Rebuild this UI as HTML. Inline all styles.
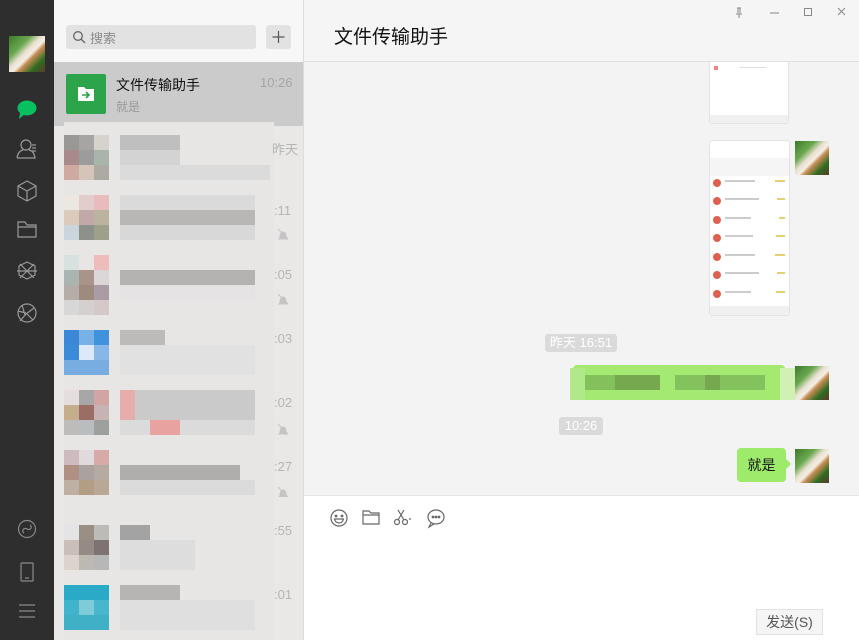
<!DOCTYPE html>
<html><head><meta charset="utf-8"><style>
*{margin:0;padding:0;box-sizing:border-box}
body{width:859px;height:640px;overflow:hidden;position:relative;font-family:"Liberation Sans","Noto Sans CJK SC",sans-serif;background:#f3f3f3}
.a{position:absolute}
.side{left:0;top:0;width:54px;height:640px;background:#2e2e2e}
.list{left:54px;top:0;width:250px;height:640px;background:#e9e8e7}
.c{position:absolute;width:15px;height:15px}
.cat{background:linear-gradient(135deg,#3c7a2a 0%,#6aa84f 30%,#e9e0d0 45%,#f3efe6 55%,#c98d55 62%,#2f6b22 80%,#5a3a2a 100%)}
.ts{background:#dadada;color:#fff;font-size:13px;border-radius:3px;text-align:center;line-height:18px}
.t{color:#b5b5b5;font-size:13px}
</style></head><body>
<div class="a side">
  <div class="a cat" style="left:9px;top:36px;width:36px;height:36px"></div>
  <svg class="a" style="left:0;top:95px" width="54" height="240" viewBox="0 0 54 240" fill="none" stroke="#9a9a9a" stroke-width="1.2">
    <ellipse cx="27" cy="13" rx="9.5" ry="7.5" fill="#07c160" stroke="none"/><path d="M20 18 L19 24 L25 19z" fill="#07c160" stroke="none"/>
    <circle cx="26" cy="50" r="5"/><path d="M17 63 Q18 56 23 55 M29 55 Q34 56 35 63 H17 M32 50 h4 M32 53 h4 M32 56 h4"/>
    <path d="M27 86 L36 91 V101 L27 106 L18 101 V91Z M18 91 L27 96 L36 91 M27 96 V106"/>
    <path d="M18 127 h7 l2 3 h9 v12 h-18z M18 132 h18"/>
    <path d="M27 167 l8 4 v9 l-8 4 l-8-4 v-9z M20 169 l14 14 M34 169 l-14 14 M17 176 h20" />
    <circle cx="27" cy="218" r="9"/><path d="M22 210 l3 10 M34 213 l-8 6 M33 225 l-6-6 M20 226 l6-7 M18 216 l8 2"/>
  </svg>
  <svg class="a" style="left:0;top:515px" width="54" height="110" fill="none" stroke="#8a8a8a" stroke-width="1.2">
    <circle cx="27" cy="14" r="8.5"/><path d="M24 18 c-3-2 0-6 3-4 c3 2 6-2 3-4"/>
    <rect x="21" y="48" width="12" height="18" rx="1"/><path d="M25 63 h4"/>
    <path d="M19 90 h16 M19 96 h16 M19 102 h16"/>
  </svg>
</div>
<div class="a list">
  <div class="a" style="left:0;top:0;width:250px;height:62px;background:#f7f7f7"></div>
  <div class="a" style="left:12px;top:25px;width:190px;height:24px;background:#e2e2e2;border-radius:3px"></div>
  <svg class="a" style="left:18px;top:30px" width="14" height="14" fill="none" stroke="#666" stroke-width="1.3"><circle cx="6" cy="6" r="4.3"/><path d="M9 9 l4 4"/></svg>
  <div class="a" style="left:36px;top:28px;font-size:13px;color:#8a8a8a">搜索</div>
  <div class="a" style="left:212px;top:25px;width:25px;height:24px;background:#e2e2e2;border-radius:3px"></div>
  <svg class="a" style="left:212px;top:25px" width="25" height="24" stroke="#555" stroke-width="1.2"><path d="M12.5 6 v12 M6.5 12 h12"/></svg>
  <div class="a" style="left:0;top:62px;width:250px;height:64px;background:#cbcbcb"></div>
  <div class="a" style="left:12px;top:74px;width:40px;height:40px;background:#2ca44a;border-radius:2px"></div>
  <svg class="a" style="left:12px;top:74px" width="40" height="40"><path d="M12 13 h6 l2 2 h8 v12 h-16z" fill="#fff"/><path d="M16 21 h7 M20 18 l3 3 l-3 3" stroke="#2ca44a" stroke-width="1.6" fill="none"/></svg>
  <div class="a" style="left:62px;top:75px;font-size:14px;color:#111">文件传输助手</div>
  <div class="a" style="left:62px;top:98px;font-size:12px;color:#999">就是</div>
  <div class="a" style="left:206px;top:75px;font-size:13px;color:#a5a5a5">10:26</div>

  <div class="a" style="left:10px;top:122px;width:210px;height:518px;background:#e7e6e5"></div>
  <!-- item 2 -->
  <div class="c" style="left:10px;top:135px;background:#9a9797"></div><div class="c" style="left:25px;top:135px;background:#a7a5a4"></div><div class="c" style="left:40px;top:135px;background:#d5d3cc"></div>
  <div class="c" style="left:10px;top:150px;background:#a88a8a"></div><div class="c" style="left:25px;top:150px;background:#9c9c9c"></div><div class="c" style="left:40px;top:150px;background:#a9b5aa"></div>
  <div class="c" style="left:10px;top:165px;background:#cfaaa3"></div><div class="c" style="left:25px;top:165px;background:#d5c4ba"></div><div class="c" style="left:40px;top:165px;background:#ada9a3"></div>
  <div class="a" style="left:66px;top:135px;width:60px;height:15px;background:#c0bfbf"></div>
  <div class="a" style="left:66px;top:150px;width:60px;height:15px;background:#d3d3d3"></div>
  <div class="a" style="left:66px;top:165px;width:150px;height:15px;background:#dbdbdb"></div>
  <div class="a t" style="left:218px;top:139px">昨天</div>
  <!-- item 3 -->
  <div class="c" style="left:10px;top:195px;background:#ebe8e2"></div><div class="c" style="left:25px;top:195px;background:#e3cccc"></div><div class="c" style="left:40px;top:195px;background:#e8bcbd"></div>
  <div class="c" style="left:10px;top:210px;background:#dccabb"></div><div class="c" style="left:25px;top:210px;background:#c1a9a8"></div><div class="c" style="left:40px;top:210px;background:#bab49e"></div>
  <div class="c" style="left:10px;top:225px;background:#cad5dd"></div><div class="c" style="left:25px;top:225px;background:#8c918c"></div><div class="c" style="left:40px;top:225px;background:#9ea08a"></div>
  <div class="a" style="left:66px;top:195px;width:135px;height:15px;background:#dadada"></div>
  <div class="a" style="left:66px;top:210px;width:135px;height:15px;background:#b9b7b6"></div>
  <div class="a" style="left:66px;top:225px;width:135px;height:15px;background:#d9d8d8"></div>
  <div class="a t" style="left:220px;top:203px">:11</div>
  <!-- item 4 -->
  <div class="c" style="left:10px;top:255px;background:#d7e2e0"></div><div class="c" style="left:40px;top:255px;background:#eebcbb"></div>
  <div class="c" style="left:10px;top:270px;background:#a8b5b0"></div><div class="c" style="left:25px;top:270px;background:#a89488"></div><div class="c" style="left:40px;top:270px;background:#ddd6d8"></div>
  <div class="c" style="left:10px;top:285px;background:#b5aea8"></div><div class="c" style="left:25px;top:285px;background:#9f8a80"></div><div class="c" style="left:40px;top:285px;background:#ab9ba4"></div>
  <div class="c" style="left:10px;top:300px;background:#d7d7d7"></div><div class="c" style="left:25px;top:300px;background:#d5d0d0"></div><div class="c" style="left:40px;top:300px;background:#d5c8c8"></div>
  <div class="a" style="left:66px;top:270px;width:135px;height:15px;background:#b5b3b2"></div>
  <div class="a" style="left:66px;top:285px;width:135px;height:15px;background:#e5e3e3"></div>
  <div class="a t" style="left:220px;top:267px">:05</div>
  <!-- item 5 -->
  <div class="c" style="left:10px;top:330px;background:#3b88d8"></div><div class="c" style="left:25px;top:330px;background:#78b1e6"></div><div class="c" style="left:40px;top:330px;background:#4192dc"></div>
  <div class="c" style="left:10px;top:345px;background:#3b8bd8"></div><div class="c" style="left:25px;top:345px;background:#dbe9f8"></div><div class="c" style="left:40px;top:345px;background:#86b7e7"></div>
  <div class="c" style="left:10px;top:360px;width:45px;background:#77ade0"></div>
  <div class="a" style="left:66px;top:330px;width:45px;height:15px;background:#bdbbba"></div>
  <div class="a" style="left:66px;top:345px;width:135px;height:30px;background:#e2e1e1"></div>
  <div class="a t" style="left:220px;top:331px">:03</div>
  <!-- item 6 -->
  <div class="c" style="left:10px;top:390px;background:#e6dede"></div><div class="c" style="left:25px;top:390px;background:#a8a7a8"></div><div class="c" style="left:40px;top:390px;background:#d2a5a5"></div>
  <div class="c" style="left:10px;top:405px;background:#c4ae8c"></div><div class="c" style="left:25px;top:405px;background:#9b6e65"></div><div class="c" style="left:40px;top:405px;background:#c7b3b3"></div>
  <div class="c" style="left:10px;top:420px;background:#bdbcbb"></div><div class="c" style="left:25px;top:420px;background:#babdc0"></div><div class="c" style="left:40px;top:420px;background:#9ea09e"></div>
  <div class="a" style="left:66px;top:390px;width:135px;height:30px;background:#cbcaca"></div>
  <div class="c" style="left:66px;top:390px;width:15px;height:30px;background:#e6adad"></div>
  <div class="a" style="left:66px;top:420px;width:135px;height:15px;background:#dcdbdb"></div>
  <div class="c" style="left:96px;top:420px;width:30px;background:#e8a3a0"></div>
  <div class="a t" style="left:220px;top:395px">:02</div>
  <!-- item 7 -->
  <div class="c" style="left:10px;top:450px;background:#cdbbbf"></div><div class="c" style="left:25px;top:450px;background:#e0dadc"></div><div class="c" style="left:40px;top:450px;background:#d6aaa6"></div>
  <div class="c" style="left:10px;top:465px;background:#ae9182"></div><div class="c" style="left:25px;top:465px;background:#a9a29f"></div><div class="c" style="left:40px;top:465px;background:#b5aba3"></div>
  <div class="c" style="left:10px;top:480px;background:#beb0a2"></div><div class="c" style="left:25px;top:480px;background:#b39d85"></div><div class="c" style="left:40px;top:480px;background:#b8a895"></div>
  <div class="a" style="left:66px;top:465px;width:120px;height:15px;background:#afaead"></div>
  <div class="a" style="left:66px;top:480px;width:135px;height:15px;background:#dcdbdb"></div>
  <div class="a t" style="left:220px;top:459px">:27</div>
  <!-- item 8 -->
  <div class="c" style="left:10px;top:525px;background:#e4e4e6"></div><div class="c" style="left:25px;top:525px;background:#9a8f84"></div><div class="c" style="left:40px;top:525px;background:#bdbbb8"></div>
  <div class="c" style="left:10px;top:540px;background:#c9bfb8"></div><div class="c" style="left:25px;top:540px;background:#958a84"></div><div class="c" style="left:40px;top:540px;background:#7d7370"></div>
  <div class="c" style="left:10px;top:555px;background:#dcd3ce"></div><div class="c" style="left:25px;top:555px;background:#bdb8b2"></div><div class="c" style="left:40px;top:555px;background:#b7b7b7"></div>
  <div class="a" style="left:66px;top:525px;width:30px;height:15px;background:#a3a3a3"></div>
  <div class="a" style="left:66px;top:540px;width:75px;height:30px;background:#dedddd"></div>
  <div class="a t" style="left:220px;top:523px">:55</div>
  <!-- item 9 -->
  <div class="c" style="left:10px;top:585px;width:45px;background:#2aaac6"></div>
  <div class="c" style="left:10px;top:600px;background:#40b4cb"></div><div class="c" style="left:25px;top:600px;background:#7fcbd8"></div><div class="c" style="left:40px;top:600px;background:#48b7cd"></div>
  <div class="c" style="left:10px;top:615px;width:45px;background:#40b0c7"></div>
  <div class="a" style="left:66px;top:585px;width:60px;height:15px;background:#b7b5b4"></div>
  <div class="a" style="left:66px;top:600px;width:135px;height:30px;background:#e0dfdf"></div>
  <div class="a t" style="left:220px;top:587px">:01</div>
  <svg class="a" style="left:222px;top:227px" width="14" height="270" fill="#c4c4c4">
    <g><path d="M4 11 q0-6 3-6 q3 0 3 6 l1 1 h-8z M2 2 l10 10" stroke="#c4c4c4" stroke-width="1"/></g>
    <g transform="translate(0,65)"><path d="M4 11 q0-6 3-6 q3 0 3 6 l1 1 h-8z M2 2 l10 10" stroke="#c4c4c4" stroke-width="1"/></g>
    <g transform="translate(0,195)"><path d="M4 11 q0-6 3-6 q3 0 3 6 l1 1 h-8z M2 2 l10 10" stroke="#c4c4c4" stroke-width="1"/></g>
    <g transform="translate(0,258)"><path d="M4 11 q0-6 3-6 q3 0 3 6 l1 1 h-8z M2 2 l10 10" stroke="#c4c4c4" stroke-width="1"/></g>
  </svg>
</div>
<div class="a" style="left:303px;top:0;width:1px;height:640px;background:#dcdcdc"></div>
<!-- chat -->
<div class="a" style="left:304px;top:0;width:555px;height:62px;background:#f5f5f5;border-bottom:1px solid #e2e2e2"></div>
<div class="a" style="left:334px;top:22px;font-size:19px;color:#111">文件传输助手</div>
<svg class="a" style="left:730px;top:6px" width="120" height="14" stroke="#888" fill="none" stroke-width="1">
  <path d="M7 2 h4 M8 2 v5 M10 2 v5 M6 8 h6 M9 8 v4"/><path d="M40 7 h9"/><rect x="74.5" y="2.5" width="7" height="7"/><path d="M108 2 l7 7 M115 2 l-7 7"/>
</svg>
<!-- screenshots -->
<div class="a" style="left:709px;top:62px;width:80px;height:62px;background:#fff;border:1px solid #e3e3e3;border-top:none;border-radius:0 0 3px 3px"></div>
<div class="a" style="left:710px;top:115px;width:78px;height:8px;background:#f0f0f0"></div>
<div class="a" style="left:714px;top:66px;width:4px;height:4px;background:#e88"></div>
<div class="a" style="left:740px;top:67px;width:26px;height:1px;background:#ddd"></div>
<div class="a" style="left:709px;top:140px;width:81px;height:176px;background:#fff;border:1px solid #e3e3e3;border-radius:3px"></div>
<div class="a" style="left:710px;top:158px;width:79px;height:18px;background:#f5f5f5"></div>
<div class="a" style="left:710px;top:306px;width:79px;height:9px;background:#f0f0f0"></div>
<svg class="a" style="left:709px;top:175px" width="81" height="130">
  <g fill="#e06050"><circle cx="8" cy="8" r="4"/><circle cx="8" cy="26" r="4"/><circle cx="8" cy="45" r="4"/><circle cx="8" cy="63" r="4"/><circle cx="8" cy="82" r="4"/><circle cx="8" cy="100" r="4"/><circle cx="8" cy="119" r="4"/></g>
  <g fill="#ccc"><rect x="16" y="5" width="30" height="2"/><rect x="16" y="23" width="34" height="2"/><rect x="16" y="42" width="26" height="2"/><rect x="16" y="60" width="28" height="2"/><rect x="16" y="79" width="30" height="2"/><rect x="16" y="97" width="34" height="2"/><rect x="16" y="116" width="26" height="2"/></g>
  <g fill="#e8cf70"><rect x="66" y="5" width="10" height="2"/><rect x="68" y="23" width="8" height="2"/><rect x="70" y="42" width="6" height="2"/><rect x="67" y="60" width="9" height="2"/><rect x="66" y="79" width="10" height="2"/><rect x="68" y="97" width="8" height="2"/><rect x="67" y="116" width="9" height="2"/></g>
</svg>
<div class="a cat" style="left:795px;top:141px;width:34px;height:34px"></div>
<div class="a ts" style="left:545px;top:334px;width:72px">昨天 16:51</div>
<div class="a" style="left:573px;top:365px;width:212px;height:35px;background:#a3e972;border-radius:4px"></div>
<div class="a" style="left:570px;top:368px;width:15px;height:32px;background:#b0e88a"></div>
<div class="a" style="left:780px;top:368px;width:15px;height:32px;background:#d1f0b4"></div>
<div class="a" style="left:585px;top:375px;width:75px;height:15px;background:#84c05c"></div>
<div class="a" style="left:615px;top:375px;width:45px;height:15px;background:#75a84f"></div>
<div class="a" style="left:675px;top:375px;width:90px;height:15px;background:#84c25d"></div>
<div class="a" style="left:705px;top:375px;width:15px;height:15px;background:#75a84f"></div>
<div class="a cat" style="left:795px;top:366px;width:34px;height:34px"></div>
<div class="a ts" style="left:559px;top:417px;width:44px">10:26</div>
<div class="a" style="left:737px;top:448px;width:49px;height:34px;background:#9eea6a;border-radius:4px;font-size:14px;color:#111;line-height:34px;text-align:center">就是</div>
<svg class="a" style="left:786px;top:459px" width="6" height="10"><path d="M0 0 L5 5 L0 10z" fill="#9eea6a"/></svg>
<div class="a cat" style="left:795px;top:449px;width:34px;height:34px"></div>
<!-- input -->
<div class="a" style="left:304px;top:495px;width:555px;height:145px;background:#fff;border-top:1px solid #e5e5e5"></div>
<svg class="a" style="left:325px;top:506px" width="130" height="24" fill="none" stroke="#666" stroke-width="1.2">
  <circle cx="14" cy="12" r="8"/><circle cx="11" cy="10" r=".8" fill="#666"/><circle cx="17" cy="10" r=".8" fill="#666"/><path d="M9.5 13 h9 q-1 4-4.5 4 q-3.5 0-4.5-4z"/>
  <path d="M38 5 h6 l2 2 h8 v11 h-16z M38 9 h16"/>
  <circle cx="72" cy="16" r="2.5"/><circle cx="80" cy="16" r="2.5"/><path d="M73 14 L79 4 M79 14 L73 4 M84 13 h2"/>
  <ellipse cx="111" cy="11" rx="8" ry="7"/><path d="M106 17 l-2 4 l5-3"/><circle cx="108" cy="11" r=".8" fill="#666"/><circle cx="111" cy="11" r=".8" fill="#666"/><circle cx="114" cy="11" r=".8" fill="#666"/>
</svg>
<div class="a" style="left:756px;top:609px;width:67px;height:26px;background:#f5f5f5;border:1px solid #e1e1e1;font-size:14px;color:#555;text-align:center;line-height:24px">发送(S)</div>
</body></html>
